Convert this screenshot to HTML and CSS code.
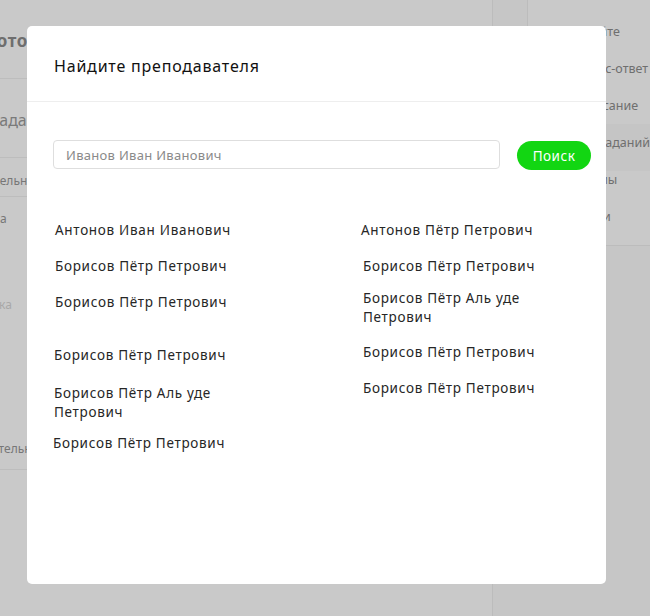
FILE: index.html
```html
<!DOCTYPE html>
<html lang="ru">
<head>
<meta charset="utf-8">
<title>Найдите преподавателя</title>
<link rel="stylesheet" href="styles.css">
</head>
<body>
<div class="page">
  <div class="card card-main">
    <div class="row row-head"><span class="head-text">Фото профиля</span></div>
    <div class="row row-sub"><span class="sub-text">Задания</span></div>
    <div class="row row-a"><span class="small-text">Дельность</span></div>
    <div class="row row-b">
      <span class="small-text t-a">а</span>
      <span class="faint-text t-ka">ка</span>
      <span class="small-text t-teln">Длительность</span>
    </div>
    <div class="row row-d"></div>
  </div>
  <div class="card card-side">
    <div class="side-item">На сайте</div>
    <div class="side-item">Вопрос-ответ</div>
    <div class="side-item">Расписание</div>
    <div class="side-item side-active">Банк заданий</div>
    <div class="side-item">Форумы</div>
    <div class="side-item">Задачи</div>
  </div>
</div>

<div class="overlay">
  <div class="modal">
    <div class="modal-head">
      <h2 class="modal-title">Найдите преподавателя</h2>
    </div>
    <div class="modal-body">
      <div class="search">
        <input class="search-input" type="text" placeholder="Иванов Иван Иванович">
        <button class="search-btn" type="button">Поиск</button>
      </div>
      <div class="results">
        <ul class="col col-left">
          <li class="name">Антонов Иван Иванович</li>
          <li class="name g17">Борисов Пётр Петрович</li>
          <li class="name g17">Борисов Пётр Петрович</li>
          <li class="name g34 sh1">Борисов Пётр Петрович</li>
          <li class="name g19 sh1">Борисов Пётр Аль уде Петрович</li>
          <li class="name g12 sh2">Борисов Пётр Петрович</li>
        </ul>
        <ul class="col col-right">
          <li class="name">Антонов Пётр Петрович</li>
          <li class="name g17 sh-r">Борисов Пётр Петрович</li>
          <li class="name g13 sh-r">Борисов Пётр Аль уде Петрович</li>
          <li class="name g16 sh-r">Борисов Пётр Петрович</li>
          <li class="name g17 sh-r">Борисов Пётр Петрович</li>
        </ul>
      </div>
    </div>
  </div>
</div>
</body>
</html>
```

FILE: styles.css
```css
* { box-sizing: border-box; }

html, body {
  margin: 0;
  padding: 0;
  height: 616px;
  overflow: hidden;
}

body {
  background: #c6c6c6;
  font-family: "Noto Sans", "DejaVu Sans", sans-serif;
}

/* background page (dimmed) */
.page {
  display: flex;
  align-items: flex-start;
  gap: 34px;
  margin-top: -20px;
  height: 636px;
}

.card {
  flex-shrink: 0;
  background: #c9c9c9;
  border: 1px solid #bcbcbc;
  border-radius: 14px;
}

.card-main {
  width: 514px;
  height: 636px;
  margin-left: -21px;
  border-left: none;
  border-bottom: none;
  border-bottom-right-radius: 0;
  overflow: hidden;
}

.card-side {
  width: 150px;
  height: 266px;
  padding-top: 42px;
  padding-left: 39px;
  overflow: hidden;
}

.row {
  border-bottom: 1px solid #bdbdbd;
  white-space: nowrap;
  overflow: hidden;
}

.row-head { height: 98px; padding-top: 48px; }
.row-sub { height: 79px; padding-top: 30px; }
.row-a { height: 39px; padding-top: 10px; }
.row-b {
  height: 273px;
  display: flex;
  flex-direction: column;
  align-items: flex-start;
}
.row-d { height: 60px; border-bottom: none; }

.head-text {
  margin-left: 2px;
  font-size: 17px;
  font-weight: 700;
  color: #6e6e6e;
  letter-spacing: 0.5px;
}

.sub-text {
  margin-left: 11px;
  font-size: 16px;
  color: #7a7a7a;
}

.row-a .small-text { margin-left: 12px; }

.small-text {
  font-size: 12px;
  color: #777;
}

.faint-text {
  font-size: 12px;
  color: #a8a8a8;
}

.t-a { margin-top: 13px; margin-left: 21px; }
.t-ka { margin-top: 69px; margin-left: 20px; }
.t-teln { margin-top: 127px; margin-left: -4px; }

.side-item {
  height: 37px;
  font-size: 12.5px;
  color: #6f6f6f;
  white-space: nowrap;
}

.side-active {
  background: #c5c5c5;
  margin-left: -39px;
  padding-left: 39px;
  margin-top: -10px;
  padding-top: 10px;
  height: 47px;
}

/* modal */
.overlay {
  position: fixed;
  inset: 0;
}

.modal {
  position: absolute;
  left: 27px;
  top: 26px;
  width: 579px;
  height: 558px;
  background: #fff;
  border-radius: 5px;
}

.modal-head {
  height: 76px;
  border-bottom: 1px solid #eeeeee;
  padding: 30px 27px 0;
}

.modal-title {
  margin: 0;
  font-size: 16px;
  font-weight: 400;
  color: #111;
  letter-spacing: 0.8px;
  line-height: 20px;
}

.modal-body {
  padding: 37px 15px 0 26px;
}

.search {
  display: flex;
  align-items: center;
  gap: 17px;
}

.search-input {
  width: 447px;
  height: 29px;
  border: 1px solid #dedede;
  border-radius: 4px;
  padding: 0 12px;
  font-family: inherit;
  font-size: 13px;
  color: #333;
  outline: none;
}

.search-input::placeholder {
  color: #8a8a8a;
  letter-spacing: 0.3px;
}

.search-btn {
  width: 74px;
  height: 29px;
  margin-top: 2px;
  border: none;
  border-radius: 15px;
  background: #12d612;
  color: #fff;
  font-family: inherit;
  font-size: 13.5px;
  letter-spacing: 0.5px;
  padding: 0;
}

.results {
  display: flex;
  margin-top: 51px;
}

.col {
  list-style: none;
  margin: 0;
  padding: 0;
  width: 200px;
}

.col-left { margin-left: 2px; }
.col-right { margin-left: 106px; }

.name {
  font-size: 13.5px;
  line-height: 19px;
  color: #262626;
  letter-spacing: 0.7px;
}

.g12 { margin-top: 12px; }
.g13 { margin-top: 13px; }
.g16 { margin-top: 16px; }
.g17 { margin-top: 17px; }
.g19 { margin-top: 19px; }
.g34 { margin-top: 34px; }

.sh1 { margin-left: -1px; }
.sh2 { margin-left: -2px; }
.sh-r { margin-left: 2px; }
```
